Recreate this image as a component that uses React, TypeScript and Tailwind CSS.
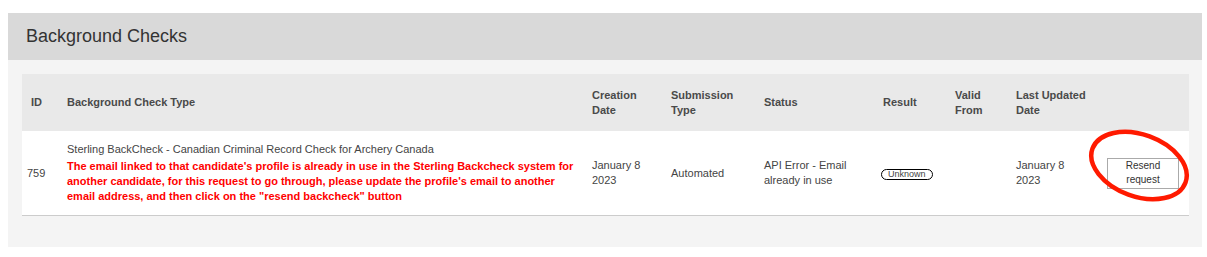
import React from "react";

// --- Types ---
interface Column {
  label: string[];
}

// --- Data ---
const columns: Column[] = [
  { label: ["ID"] },
  { label: ["Background Check Type"] },
  { label: ["Creation", "Date"] },
  { label: ["Submission", "Type"] },
  { label: ["Status"] },
  { label: ["Result"] },
  { label: ["Valid", "From"] },
  { label: ["Last Updated", "Date"] },
  { label: [] },
];

const errorLines = [
  "The email linked to that candidate's profile is already in use in the Sterling Backcheck system for",
  "another candidate, for this request to go through, please update the profile's email to another",
  'email address, and then click on the "resend backcheck" button',
];

const grid =
  "grid grid-cols-[36px_525px_79px_93px_119px_72px_61px_91px_91px]";

// --- Annotation circle drawn over the resend button ---
const RedCircle = () => (
  <svg
    className="absolute left-[1086px] top-[128px] pointer-events-none"
    width="106"
    height="76"
    viewBox="0 0 106 76"
  >
    <ellipse
      cx="53"
      cy="37.5"
      rx="49.5"
      ry="31"
      transform="rotate(20 53 37.5)"
      fill="none"
      stroke="#ff1a00"
      strokeWidth="4.5"
    />
  </svg>
);

export default function App() {
  return (
    <div className="relative w-[1207px] h-[257px] bg-white pt-[13px] pl-[8px] font-['Liberation_Sans',Arial,sans-serif]">
      <div className="w-[1194px]">
        {/* Panel header */}
        <div className="h-[47px] bg-[#d9d9d9] flex items-center pl-[18px]">
          <h2 className="text-[18px] text-[#333]">Background Checks</h2>
        </div>

        {/* Panel body */}
        <div className="bg-[#f4f4f4] pt-[14px] pl-[14px] pr-[13px] pb-[31px]">
          {/* Table head */}
          <div className={`${grid} h-[57px] bg-[#e9e9e9] items-center`}>
            {columns.map((col, i) => (
              <div
                key={i}
                className="pl-[9px] text-[11px] leading-[15px] font-bold text-[#4a4a4a]"
              >
                {col.label.map((l) => (
                  <div key={l}>{l}</div>
                ))}
              </div>
            ))}
          </div>

          {/* Table row */}
          <div
            className={`${grid} h-[85px] bg-white border-b border-[#cccccc] items-center text-[11px] leading-[15px] text-[#444]`}
          >
            <div className="pl-[5px]">759</div>
            <div className="pl-[9px]">
              <div>Sterling BackCheck - Canadian Criminal Record Check for Archery Canada</div>
              <div className="mt-[2px] font-bold text-[#ff0000] whitespace-nowrap">
                {errorLines.map((l) => (
                  <div key={l}>{l}</div>
                ))}
              </div>
            </div>
            <div className="pl-[9px]">
              <div>January 8</div>
              <div>2023</div>
            </div>
            <div className="pl-[9px]">Automated</div>
            <div className="pl-[9px]">
              <div>API Error - Email</div>
              <div>already in use</div>
            </div>
            <div className="pl-[7px]">
              <span className="inline-flex items-center h-[11px] px-[6px] rounded-full border border-black text-[9px] leading-none text-[#444]">
                Unknown
              </span>
            </div>
            <div className="pl-[9px]" />
            <div className="pl-[9px]">
              <div>January 8</div>
              <div>2023</div>
            </div>
            <div className="pl-[9px]">
              <button className="w-[72px] h-[31px] bg-white border border-[#aaaaaa] text-[10px] leading-[14px] text-[#333]">
                Resend
                <br />
                request
              </button>
            </div>
          </div>
        </div>
      </div>
      <RedCircle />
    </div>
  );
}
